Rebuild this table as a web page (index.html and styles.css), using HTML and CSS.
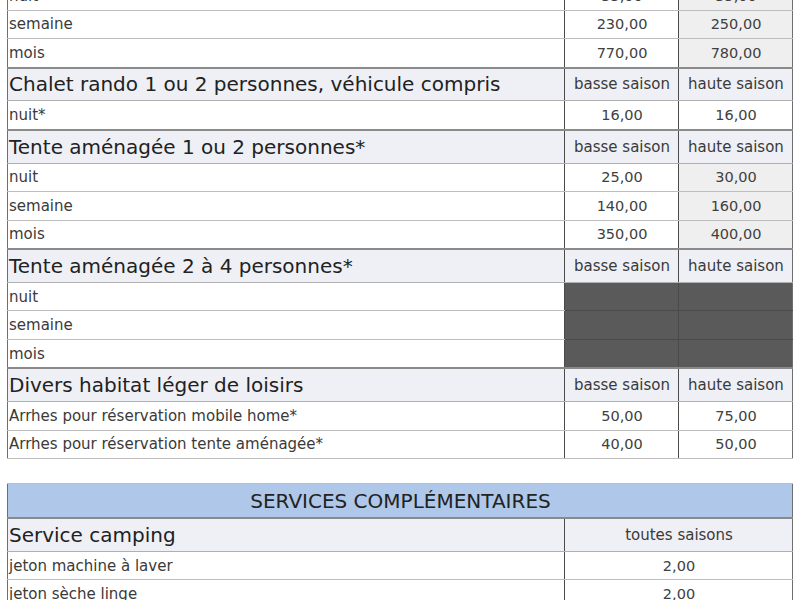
FILE: index.html
```html
<!DOCTYPE html>
<html lang="fr">
<head>
<meta charset="utf-8">
<link rel="stylesheet" href="styles.css">
</head>
<body>
<div class="page">
<table class="tarifs">
  <colgroup><col class="c1"><col class="c2"><col class="c3"></colgroup>
  <tr class="row"><td class="lbl">nuit</td><td class="num">35,00</td><td class="num alt">35,00</td></tr>
  <tr class="row"><td class="lbl">semaine</td><td class="num">230,00</td><td class="num alt">250,00</td></tr>
  <tr class="row"><td class="lbl">mois</td><td class="num">770,00</td><td class="num alt">780,00</td></tr>
  <tr class="head"><td class="title">Chalet rando 1 ou 2 personnes, véhicule compris</td><td class="season">basse saison</td><td class="season">haute saison</td></tr>
  <tr class="row"><td class="lbl">nuit*</td><td class="num">16,00</td><td class="num">16,00</td></tr>
  <tr class="head"><td class="title">Tente aménagée 1 ou 2 personnes*</td><td class="season">basse saison</td><td class="season">haute saison</td></tr>
  <tr class="row"><td class="lbl">nuit</td><td class="num">25,00</td><td class="num alt">30,00</td></tr>
  <tr class="row"><td class="lbl">semaine</td><td class="num">140,00</td><td class="num alt">160,00</td></tr>
  <tr class="row"><td class="lbl">mois</td><td class="num">350,00</td><td class="num alt">400,00</td></tr>
  <tr class="head"><td class="title">Tente aménagée 2 à 4 personnes*</td><td class="season">basse saison</td><td class="season">haute saison</td></tr>
  <tr class="row"><td class="lbl">nuit</td><td class="dark"></td><td class="dark"></td></tr>
  <tr class="row"><td class="lbl">semaine</td><td class="dark"></td><td class="dark"></td></tr>
  <tr class="row"><td class="lbl">mois</td><td class="dark"></td><td class="dark"></td></tr>
  <tr class="head"><td class="title">Divers habitat léger de loisirs</td><td class="season">basse saison</td><td class="season">haute saison</td></tr>
  <tr class="row"><td class="lbl">Arrhes pour réservation mobile home*</td><td class="num">50,00</td><td class="num">75,00</td></tr>
  <tr class="row"><td class="lbl">Arrhes pour réservation tente aménagée*</td><td class="num">40,00</td><td class="num">50,00</td></tr>
</table>

<table class="services">
  <colgroup><col class="s1"><col class="s2"></colgroup>
  <tr class="banner"><td colspan="2">SERVICES COMPLÉMENTAIRES</td></tr>
  <tr class="head"><td class="title">Service camping</td><td class="season">toutes saisons</td></tr>
  <tr class="row"><td class="lbl">jeton machine à laver</td><td class="num">2,00</td></tr>
  <tr class="row"><td class="lbl">jeton sèche linge</td><td class="num">2,00</td></tr>
</table>
</div>
</body>
</html>
```

FILE: styles.css
```css
html, body {
  margin: 0;
  padding: 0;
  background: #ffffff;
}
body {
  font-family: "DejaVu Sans", Verdana, sans-serif;
  color: #3a3a3a;
}
.page {
  padding: 0 8px 0 7px;
  margin-top: -19px;
}
table {
  border-collapse: collapse;
  table-layout: fixed;
}
.tarifs {
  width: 785px;
  border: 1.5px solid #6e6e6e;
}
.c1 { width: 557px; }
.c2 { width: 114px; }
.c3 { width: 114px; }
td {
  padding: 0 0 0 1px;
  border-top: 1px solid #bdbdbd;
  border-bottom: 1px solid #bdbdbd;
  white-space: nowrap;
  overflow: hidden;
}
td + td {
  border-left: 1px solid #4a4a4a;
}
.row td {
  height: 27.5px;
  font-size: 15px;
  vertical-align: middle;
}
.head td {
  height: 31.75px;
  background: #eef0f5;
  border-top: 2px solid #8a8a8a;
  border-bottom: 1px solid #b0b0b0;
}
.title {
  font-size: 20px;
  color: #222;
}
.season {
  font-size: 15px;
  text-align: center;
  color: #3a3a3a;
}
.row .num {
  font-size: 14.5px;
  text-align: center;
  color: #404040;
}
.alt {
  background: #efefef;
}
.dark {
  background: #5a5a5a;
  border-top: 1px solid #4a4a4a;
  border-bottom: 1px solid #4a4a4a;
}
.services {
  width: 785px;
  margin-top: 24px;
  border: 1.5px solid #6e6e6e;
}
.s1 { width: 557px; }
.s2 { width: 228px; }
.banner td {
  height: 33px;
  background: #afc7e8;
  text-align: center;
  font-size: 20px;
  color: #222;
  border-bottom: 1px solid #8a8a8a;
}
```
